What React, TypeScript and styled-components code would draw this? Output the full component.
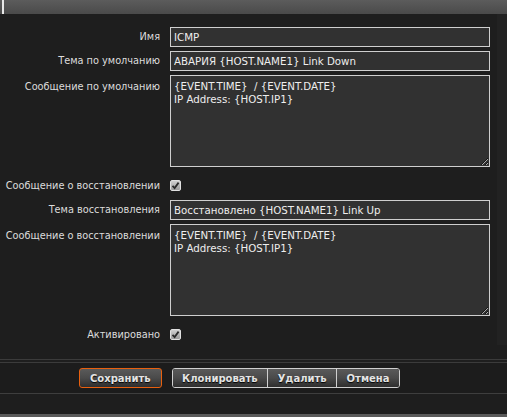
import React from "react";
import styled, { createGlobalStyle } from "styled-components";

const GlobalStyle = createGlobalStyle`
	html, body {
		margin: 0;
		padding: 0;
		background: #1e1e1e;
		font-family: "DejaVu Sans", Verdana, sans-serif;
	}
`;

const defaultMessage = "{EVENT.TIME}  / {EVENT.DATE}\nIP Address: {HOST.IP1}";

const CheckIcon = () => (
	<svg width="9" height="9" viewBox="0 0 9 9">
		<path d="M1.5 4.8 L3.6 7 L7.6 1.6" fill="none" stroke="#2a2a2a" strokeWidth="1.8" />
	</svg>
);

const App = () => {
	return (
		<Page>
			<GlobalStyle />
			<TopBar>
				<TopMark />
			</TopBar>
			<Body>
				<Form>
					<Label>Имя</Label>
					<TextInput defaultValue="ICMP" />

					<Label>Тема по умолчанию</Label>
					<TextInput defaultValue="АВАРИЯ {HOST.NAME1} Link Down" />

					<Label $align="top">Сообщение по умолчанию</Label>
					<TextArea defaultValue={defaultMessage} />

					<Label $align="check">Сообщение о восстановлении</Label>
					<CheckRow>
						<CheckBox>
							<CheckIcon />
						</CheckBox>
					</CheckRow>

					<Label>Тема восстановления</Label>
					<TextInput defaultValue="Восстановлено {HOST.NAME1} Link Up" />

					<Label $align="top">Сообщение о восстановлении</Label>
					<TextArea defaultValue={defaultMessage} />

					<Label $align="check">Активировано</Label>
					<CheckRow>
						<CheckBox>
							<CheckIcon />
						</CheckBox>
					</CheckRow>
				</Form>
				<Gutter />
			</Body>
			<Footer>
				<ButtonBar>
					<Button $primary>Сохранить</Button>
					<ButtonGroup>
						<Button $grouped>Клонировать</Button>
						<Button $grouped>Удалить</Button>
						<Button $grouped>Отмена</Button>
					</ButtonGroup>
				</ButtonBar>
			</Footer>
			<BottomStrip />
		</Page>
	);
};

export default App;

const Page = styled.div`
	width: 507px;
	height: 417px;
	display: flex;
	flex-direction: column;
	background: #1e1e1e;
	overflow: hidden;
`;

const TopBar = styled.div`
	height: 14px;
	flex-shrink: 0;
	background: linear-gradient(#5c5c5c, #4a4a4a);
	display: flex;
`;

const TopMark = styled.div`
	width: 2px;
	margin-left: 2px;
	background: #e8e8e8;
`;

const Body = styled.div`
	display: flex;
	height: 331px;
	flex-shrink: 0;
`;

const Form = styled.div`
	flex: 1;
	display: grid;
	grid-template-columns: 160px 320px;
	column-gap: 10px;
	row-gap: 4px;
	align-content: start;
	padding-top: 13px;
`;

const Gutter = styled.div`
	width: 10px;
	background: #222222;
`;

const labelOffset = { top: "6px", check: "9px" };

const Label = styled.label<{ $align?: "top" | "check" }>`
	font-size: 9.75px;
	line-height: 12px;
	color: #dcdcdc;
	text-align: right;
	white-space: nowrap;
	align-self: ${({ $align }) => ($align ? "start" : "center")};
	padding-top: ${({ $align }) => ($align ? labelOffset[$align] : "0")};
`;

const TextInput = styled.input`
	box-sizing: border-box;
	height: 20px;
	width: 320px;
	margin: 0;
	padding: 0 3px;
	background: #313131;
	border: 1px solid #cfcfcf;
	border-radius: 0;
	color: #eeeeee;
	font-family: "DejaVu Sans", Verdana, sans-serif;
	font-size: 10.25px;
	outline: none;
`;

const TextArea = styled.textarea`
	box-sizing: border-box;
	height: 92px;
	width: 320px;
	margin: 0;
	padding: 4px 3px;
	background: #313131;
	border: 1px solid #cfcfcf;
	border-radius: 0;
	color: #eeeeee;
	font-family: "DejaVu Sans", Verdana, sans-serif;
	font-size: 10.25px;
	line-height: 12.5px;
	outline: none;
	display: block;
`;

const CheckRow = styled.div`
	height: 25px;
	display: flex;
	align-items: flex-start;
`;

const CheckBox = styled.span`
	box-sizing: border-box;
	width: 11px;
	height: 11px;
	margin-top: 9px;
	display: grid;
	place-items: center;
	background: linear-gradient(#cfcfcf, #9c9c9c);
	border: 1px solid #e0e0e0;
	border-radius: 2px;
`;

const Footer = styled.div`
	margin-top: 14px;
	border-top: 1px solid #3b3b3b;
	border-bottom: 1px solid #3e3e3e;
	padding-top: 2px;
	background: #1e1e1e;
`;

const ButtonBar = styled.div`
	border-top: 1px solid #3b3b3b;
	height: 30px;
	background: #1c1c1c;
	display: flex;
	align-items: center;
	padding-left: 79px;
	gap: 10px;
`;

const ButtonGroup = styled.div`
	display: flex;
	border: 1px solid #cfcfcf;
	border-radius: 3px;
	overflow: hidden;
`;

const Button = styled.button<{ $primary?: boolean; $grouped?: boolean }>`
	height: ${({ $grouped }) => ($grouped ? "18px" : "20px")};
	padding: 0 ${({ $grouped }) => ($grouped ? "9.5px" : "10px")};
	margin: 0;
	background: linear-gradient(#5a5a5a 0%, #4a4a4a 50%, #2e2e2e 100%);
	border: ${({ $primary, $grouped }) =>
		$grouped ? "none" : $primary ? "1px solid #e8600f" : "1px solid #cfcfcf"};
	border-radius: ${({ $grouped }) => ($grouped ? "0" : "3px")};
	color: #e4e4e4;
	font-family: "DejaVu Sans", Verdana, sans-serif;
	font-size: 10px;
	font-weight: bold;
	text-shadow: 0 1px 1px #000;
	cursor: pointer;

	& + & {
		border-left: 1px solid #cfcfcf;
	}
`;

const BottomStrip = styled.div`
	margin-top: auto;
	height: 3px;
	background: #5a5a5a;
`;
